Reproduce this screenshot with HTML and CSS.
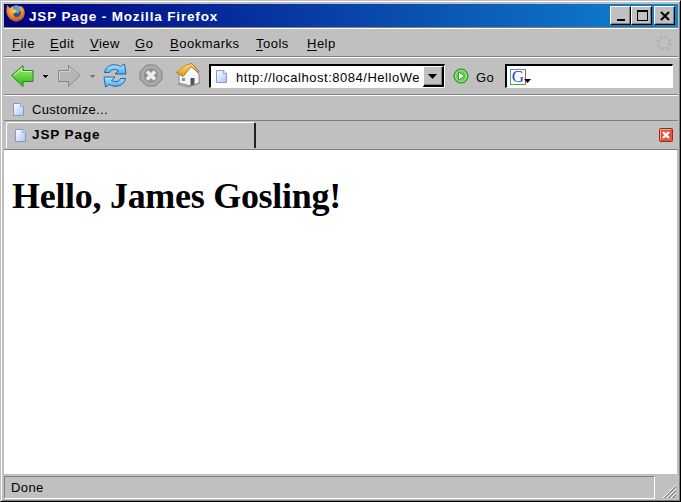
FILE: index.html
```html
<!DOCTYPE html>
<html lang="en">
<head>
<meta charset="utf-8">
<title>JSP Page - Mozilla Firefox</title>
<link rel="stylesheet" href="styles.css">
</head>
<body>
<svg width="0" height="0" class="defs" aria-hidden="true">
  <defs>
    <linearGradient id="paper" x1="0" y1="0" x2="1" y2="1"><stop offset="0" stop-color="#fff"/><stop offset="1" stop-color="#a9c4f4"/></linearGradient>
    <linearGradient id="green" x1="0" y1="0" x2="0" y2="1"><stop offset="0" stop-color="#a5ed80"/><stop offset=".5" stop-color="#65d546"/><stop offset="1" stop-color="#35b51c"/></linearGradient>
    <linearGradient id="blue" x1="0" y1="0" x2="0" y2="1"><stop offset="0" stop-color="#b5e6ff"/><stop offset="1" stop-color="#4da9ee"/></linearGradient>
    <linearGradient id="roof" x1="0" y1="0" x2="0" y2="1"><stop offset="0" stop-color="#ffe06c"/><stop offset="1" stop-color="#dc9b17"/></linearGradient>
    <radialGradient id="fox" cx=".5" cy=".3" r=".7"><stop offset="0" stop-color="#ffe068"/><stop offset=".6" stop-color="#ef8c28"/><stop offset="1" stop-color="#bd481c"/></radialGradient>
    <symbol id="page" viewBox="0 0 13 15"><path d="M1.500 1.500h7l3 3v9h-10z" fill="url(#paper)" stroke="#839bc9"/><path d="M8.500 1.500v3h3" fill="#e3ecff" stroke="#839bc9" stroke-width=".8"/></symbol>
  </defs>
</svg>
<div class="window">
  <header class="title-bar">
    <svg class="firefox" width="20" height="20" viewBox="0 0 20 20"><circle cx="10.500" cy="9.500" r="8" fill="#28548e"/><path d="M7 2c4-2 8 0 8 4l-3 4-4-3z" fill="#609fc3"/><path d="M1 1l3 3 3-2v3l4 2-2 2-2 1 2 3c4 1 6-2 6-5l-2-5 2-1c4 2 5 8 2 12-4 5-11 4-14 0C0 10 0 6 1 1z" fill="url(#fox)"/></svg>
    <span class="title">JSP Page - Mozilla Firefox</span>
    <div class="controls">
      <button class="control" aria-label="Minimize"><svg width="16" height="14"><path d="M4 10h8v2H4z"/></svg></button>
      <button class="control" aria-label="Maximize"><svg width="16" height="14"><path d="M3 1h11v11H3zM4 3v8h9V3z" fill-rule="evenodd"/></svg></button>
      <button class="control close" aria-label="Close"><svg width="16" height="14"><path d="M4 3l8 8m0-8l-8 8" stroke="#000" stroke-width="2"/></svg></button>
    </div>
  </header>
  <nav class="menu-bar">
    <div class="menus"><span><u>F</u>ile</span><span><u>E</u>dit</span><span><u>V</u>iew</span><span><u>G</u>o</span><span><u>B</u>ookmarks</span><span><u>T</u>ools</span><span><u>H</u>elp</span></div>
    <svg class="throbber" width="18" height="18"><circle cx="9" cy="9" r="6" fill="none" stroke="#b0b0b0" stroke-width="3" stroke-dasharray="2.700 2"/></svg>
  </nav>
  <div class="toolbar">
    <svg class="nav-icons" width="200" height="36" viewBox="0 0 200 36">
      <path d="M7.500 17.500L19 7.500v5h10v11H19v5z" fill="url(#green)" stroke="#23871b" stroke-linejoin="round"/><path d="M9.500 17.500l8-7v3h10" fill="none" stroke="#c9f6b5"/>
      <path d="M39 17h5v1h-1v1h-1v1h-1v-1h-1v-1h-1z"/><path d="M86 17h5v1h-1v1h-1v1h-1v-1h-1v-1h-1z" fill="#777"/>
      <path d="M76 17.500L64.500 7.500v5h-10v11h10v5z" fill="#b5b5b5" stroke="#888" stroke-linejoin="round"/><path d="M55.500 22v-8.500h10v-4l8 7" fill="none" stroke="#d0d0d0"/>
      <g fill="url(#blue)" stroke="#1868b5" stroke-linejoin="round"><path d="M100.500 14.500c1-7 10-10 16-6l4-2.500 1.500 10h-11l3.500-3.500c-4-2-8-1-9 2z"/><path d="M121.500 20.500c-1 7-10 10-16 6l-4 2.500-1.500-10h11l-3.500 3.500c4 2 8 1 9-2z"/></g>
      <path d="M142.500 7h9l6.500 6.500v8l-6.500 6.500h-9l-6.500-6.500v-8z" fill="#a6a6a6" stroke="#858585"/><circle cx="147" cy="17.500" r="8" fill="#929292" stroke="#b8b8b8"/><path d="M143 13.500l8 8m0-8l-8 8" stroke="#eee" stroke-width="3.600"/>
      <path d="M175 16l12-9 8 9v9l-8 3-12-3z" fill="#f7f7fb" stroke="#878794"/><path d="M172.500 14.500l9-7 6.500-2 7 8-1 1-7-6-8 10z" fill="url(#roof)" stroke="#a27018" stroke-linejoin="round"/><path d="M173 14l8-6 6-2-9 11z" fill="url(#roof)"/><path d="M186.500 28v-8h4v7z" fill="#4c546c"/><path d="M178 20h3v3h-3z" fill="#6e9dcc"/><path d="M173 26l11 3 12-4" fill="none" stroke="#889b72"/>
    </svg>
    <div class="address"><svg class="page-icon" width="13" height="15"><use href="#page"/></svg><span class="url">http://localhost:8084/HelloWe</span><button class="dropdown" aria-label="History"><svg width="17" height="18"><path d="M4 7h9L8.500 12z"/></svg></button></div>
    <svg class="go-icon" width="16" height="16"><circle cx="8" cy="8" r="7" fill="#65d144" stroke="#188820"/><circle cx="8" cy="8" r="5.500" fill="none" stroke="#a5e997"/><path d="M5.500 4v8l6-4z" fill="#fff" stroke="#20862b" stroke-width=".8"/></svg>
    <span class="go-label">Go</span>
    <div class="search"><span class="google">G</span><svg class="search-arrow" width="8" height="5"><path d="M0 0h7L3.500 4z"/></svg></div>
  </div>
  <div class="bookmarks"><svg width="13" height="15"><use href="#page"/></svg><span>Customize...</span></div>
  <div class="tab-bar"><div class="tab"><svg width="13" height="15"><use href="#page"/></svg><span>JSP Page</span></div><svg class="tab-close" width="14" height="14"><rect x=".5" y=".5" width="13" height="13" rx="1" fill="#dc5641" stroke="#a82620"/><path d="M1.500 12V1.500H12" fill="none" stroke="#f2a38e"/><path d="M4 4l6 6m0-6l-6 6" stroke="#fff" stroke-width="2.400"/></svg></div>
  <main class="content"><h1>Hello, James Gosling!</h1></main>
  <footer class="status"><span class="message">Done</span><svg width="16" height="24"><path d="M1 22L14 9M5 22l9-9M9 22l5-5" stroke="#fff"/><path d="M2 22l12-12M3 22l11-11M6 22l8-8M7 22l7-7M10 22l4-4M11 22l3-3" stroke="#858585" stroke-width=".8"/></svg></footer>
</div>
</body>
</html>
```
FILE: styles.css
```css
* { box-sizing: border-box; }
body { margin: 0; overflow: hidden; font: 13px/15px "Liberation Sans", sans-serif; color: #000; }
svg { display: block; flex: none; }
.defs { position: absolute; }
.window { width: 681px; height: 502px; padding: 3px 2px 2px 3px; display: flex; flex-direction: column; background: #c0c0c0; border: solid; border-width: 1px; border-color: #c0c0c0 #000 #000 #c0c0c0; box-shadow: inset 1px 1px #fff, inset -1px -1px #808080; }
.title-bar { height: 23px; display: flex; align-items: center; padding: 0 3px 0 2px; background: linear-gradient(90deg, #000080, #1084d0); color: #fff; }
.firefox { margin-top: -3px; }
.title { margin-left: 3px; margin-top: 2px; font-size: 13.5px; font-weight: bold; letter-spacing: .85px; white-space: nowrap; }
.controls { display: flex; margin-left: auto; }
button { border: 1px solid; border-color: #fff #000 #000 #fff; background: #c0c0c0; box-shadow: inset -1px -1px #808080; padding: 0; }
.control { width: 21px; height: 19px; display: flex; align-items: center; justify-content: center; }
.close { margin-left: 2px; }
.menu-bar { height: 30px; flex: none; display: flex; justify-content: space-between; align-items: center; padding: 3px 5px 0 8px; border-bottom: 1px solid #808080; box-shadow: inset 0 1px #808080, inset 0 2px #fff; }
.menus { display: grid; grid-template-columns: 38px 40px 45px 35px 86px 51px 35px; letter-spacing: .5px; margin-top: 1px; }
u { text-underline-offset: 2px; text-decoration-thickness: 1px; }
.toolbar { height: 38px; flex: none; display: flex; align-items: center; border-top: 1px solid #fff; border-bottom: 1px solid #808080; padding-right: 4px; }
.address { height: 24px; width: 236px; flex: none; margin-left: 5px; border: solid; border-width: 2px 1px 1px 2px; border-color: #000 #fff #fff #000; background: #fff; display: flex; align-items: center; overflow: hidden; }
.page-icon { margin-left: 4px; }
.url { margin-left: 8px; width: 183px; overflow: hidden; white-space: nowrap; letter-spacing: .52px; margin-top: 2px; }
.dropdown { width: 21px; height: 21px; margin-left: auto; flex: none; border-width: 1px 2px 2px 1px; }
.go-icon { margin-left: 8px; }
.go-label { width: 36px; flex: none; padding-left: 7px; margin-top: 2px; letter-spacing: .5px; }
.search { height: 24px; width: 168px; flex: none; border: solid; border-width: 2px 1px 1px 2px; border-color: #000 #fff #fff #000; background: #fff; display: flex; align-items: center; padding-left: 3px; }
.google { width: 16px; height: 16px; border: 1px solid; border-color: #5494dd #d35345 #48a84c #4994d6; color: #2549bc; font: 17px/14px "Liberation Serif", serif; text-align: center; }
.search-arrow { margin: 10px 0 0 -2px; }
.bookmarks { height: 26px; flex: none; display: flex; align-items: center; border-top: 1px solid #fff; border-bottom: 1px solid #808080; padding: 2px 0 0 8px; }
.bookmarks span { margin-left: 7px; letter-spacing: .3px; }
.tab-bar { height: 29px; flex: none; display: flex; align-items: flex-start; padding: 1px 5px 0 2px; border-bottom: 1px solid #808080; }
.tab { height: 26px; width: 250px; display: flex; align-items: center; border-top: 1px solid #fff; border-left: 1px solid #fff; border-right: 2px solid #222; border-radius: 3px 2px 0 0; padding: 0 0 1px 7px; font-weight: bold; }
.tab span { margin: -1px 0 0 5px; font-size: 13.5px; letter-spacing: .9px; }
.tab-close { margin: 6px 0 0 auto; }
.content { flex: 1; width: 673px; background: #fff; padding: 26px 8px; }
h1 { margin: 0; font: bold 36px/41px "Liberation Serif", serif; letter-spacing: -.29px; white-space: nowrap; }
.status { height: 25px; flex: none; display: flex; justify-content: space-between; padding-top: 2px; }
.message { width: 651px; height: 23px; padding: 3px 0 0 6px; border: 1px solid; border-color: #808080 #fff #fff #808080; letter-spacing: .4px; }
```
